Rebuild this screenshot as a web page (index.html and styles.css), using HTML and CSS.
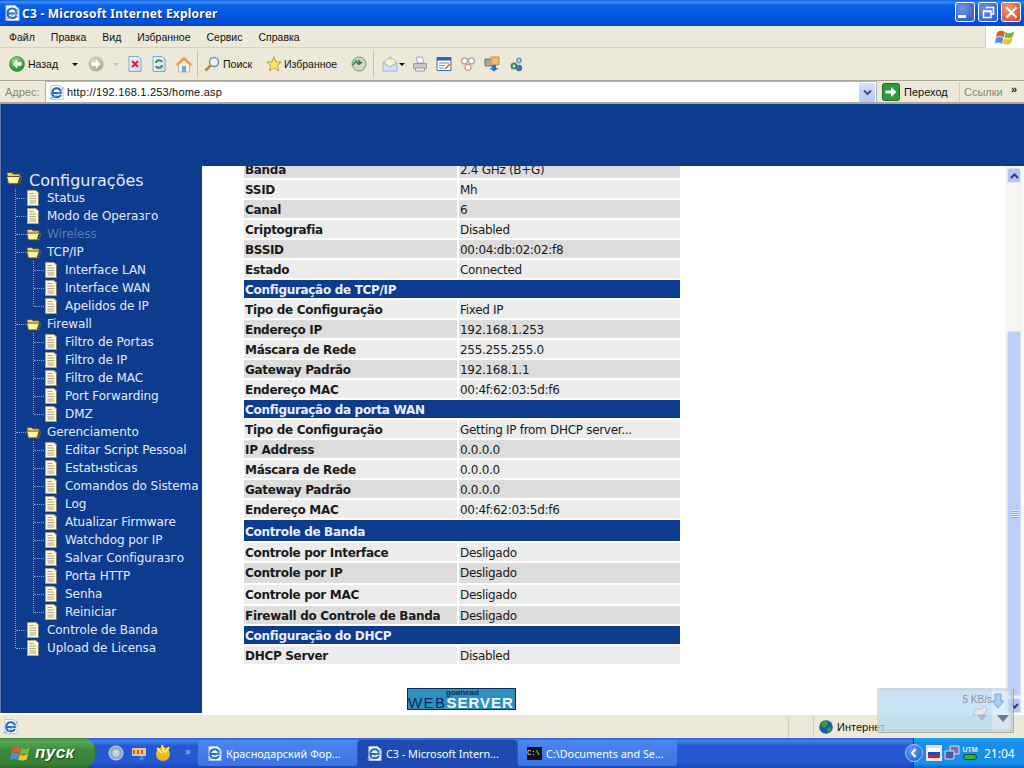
FILE: index.html
```html
<!DOCTYPE html>
<html lang="pt">
<head>
<meta charset="utf-8">
<title>C3 - Microsoft Internet Explorer</title>
<link rel="stylesheet" href="styles.css">
</head>
<body>
<svg class="defs" width="0" height="0" aria-hidden="true">
  <defs>
    <radialGradient id="gGreen" cx=".4" cy=".3" r=".8"><stop offset="0" stop-color="#a8e080"/><stop offset=".6" stop-color="#3fa83c"/><stop offset="1" stop-color="#1f7a2c"/></radialGradient>
    <radialGradient id="gGray" cx=".4" cy=".3" r=".8"><stop offset="0" stop-color="#d8d8d0"/><stop offset="1" stop-color="#a4a49c"/></radialGradient>
    <linearGradient id="gDoc" x1="0" y1="0" x2="1" y2="1"><stop offset="0" stop-color="#f6f9ff"/><stop offset="1" stop-color="#c8d8f0"/></linearGradient>
  </defs>
  <symbol id="page" viewBox="0 0 14 16"><path d="M1.500 .5H10L12.500 3V15.500H1.500Z" fill="#fff6d4" stroke="#a8a288"/><path d="M13 4V15.500H12V4Z" fill="#7e7a62"/><path d="M3.500 3.500H8M3.500 6H10M3.500 8.500H10M3.500 11H10M3.500 13H10" stroke="#a8a490"/></symbol>
  <symbol id="folder" viewBox="0 0 17 14"><path d="M1 3V1.500H6L7.500 3H14V12.500H2.500Z" fill="#e8d27a" stroke="#5a5026"/><path d="M2.500 12.800 .6 5.500H13.500L16 5.800 14 12.800Z" fill="#fff0a8" stroke="#5a5026"/><path d="M13.500 6 15.500 6 14 12.500H11.500Z" fill="#4e4420"/></symbol>
  <symbol id="ie" viewBox="0 0 16 16"><path d="M2 .5H11L15 4V15.500H2Z" fill="#fff" stroke="#b8c4d8"/><path d="M4.500 8.500H12.500C12.500 5 10.500 3.500 8.500 3.500C5.500 3.500 3.500 5.500 3.500 8.500C3.500 11.500 5.500 13 8.500 13C10.500 13 12 12 12.700 10.500" fill="none" stroke="#2468c4" stroke-width="2.200"/><path d="M.5 14C3 15.500 11 10 15.500 2.500" fill="none" stroke="#6aa8e4" stroke-width="1.100"/></symbol>
  <symbol id="round" viewBox="0 0 16 16"><circle cx="8" cy="8" r="7.500" fill="url(#gGreen)" stroke="#2a8a30" stroke-width=".6"/><path d="M8 3.500 3.800 8 8 12.500V9.800H12.500V6.200H8Z" fill="#fff"/></symbol>
  <symbol id="roundr" viewBox="0 0 16 16"><circle cx="8" cy="8" r="7.500" fill="url(#gGray)"/><path d="M8 3.500 12.200 8 8 12.500V9.800H3.500V6.200H8Z" fill="#fff"/></symbol>
  <symbol id="xp" viewBox="0 0 26 24"><path d="M3 5C7 2 10 3 13 5L11 12C8 10 5 10 1 12Z" fill="#e05a30"/><path d="M14 5C17 7 20 7 25 4L23 11C19 14 16 13 12 12Z" fill="#7cb83c"/><path d="M1 13C5 11 8 11 11 13L9 20C6 18 3 18 0 20Z" fill="#4a90e0"/><path d="M12 13C15 15 18 15 23 12L21 19C17 22 14 21 10 20Z" fill="#f2c22c"/></symbol>
</svg>
<div class="window">
  <header class="titlebar">
    <svg class="ico-title"><use href="#ie"/></svg>
    <span class="title-text">C3 - Microsoft Internet Explorer</span>
    <div class="winbtns">
      <button class="wb"><span class="min-glyph"></span></button>
      <button class="wb"><svg width="13" height="13" viewBox="0 0 13 13"><path d="M4 1.500H11.500V8H9M1.500 5H9V11.500H1.500Z M1.500 5.500H9" fill="none" stroke="#fff" stroke-width="1.500"/></svg></button>
      <button class="wb wb-close"><svg width="13" height="13" viewBox="0 0 13 13"><path d="M1.500 1.500 11.500 11.500M11.500 1.500 1.500 11.500" stroke="#fff" stroke-width="2.200"/></svg></button>
    </div>
  </header>

  <div class="menubar">
    <nav class="menu"><span>Файл</span><span>Правка</span><span>Вид</span><span>Избранное</span><span>Сервис</span><span>Справка</span></nav>
    <div class="xpbox"><svg class="xplogo"><use href="#xp"/></svg></div>
  </div>

  <div class="toolbar">
    <svg class="t16"><use href="#round"/></svg><span class="tlabel lab-back">Назад</span><i class="caret c-back"></i>
    <svg class="t16 m-fwd"><use href="#roundr"/></svg><i class="caret faint c-fwd"></i>
    <svg class="t14 m-stop" viewBox="0 0 14 16"><path d="M1 .5H10L13 3V15.500H1Z" fill="url(#gDoc)" stroke="#8aa4cc"/><path d="M4 5 10 11M10 5 4 11" stroke="#d8232a" stroke-width="2.200"/></svg>
    <svg class="t14 m-refresh" viewBox="0 0 14 16"><path d="M1 .5H10L13 3V15.500H1Z" fill="url(#gDoc)" stroke="#8aa4cc"/><path d="M4 7C4 4 9 3 10 6M10 9C10 12 5 13 4 10" fill="none" stroke="#2c9a3a" stroke-width="2"/></svg>
    <svg class="t18 m-home" viewBox="0 0 18 17"><path d="M3.500 8V16H14.500V8L9 3Z" fill="#f4f0e4" stroke="#c8b890"/><path d="M9 .8 .8 8.500 2.800 9.800 9 4.200 15.200 9.800 17.200 8.500Z" fill="#ee9a40"/><path d="M7 10H11V16H7Z" fill="#7ca4dc"/></svg>
    <span class="tsep s1"></span>
    <svg class="t16 m-search" viewBox="0 0 16 16"><circle cx="10" cy="6" r="4.500" fill="#e8f2fc" stroke="#7f8c98" stroke-width="1.400"/><path d="M6.500 9.500 1.500 14.500" stroke="#c08a3c" stroke-width="2.600"/></svg><span class="tlabel lab-search">Поиск</span>
    <svg class="t16 m-star" viewBox="0 0 16 16"><path d="M8 .8 10 5.800 15.400 6.100 11.200 9.500 12.700 14.800 8 11.900 3.300 14.800 4.800 9.500 .6 6.100 6 5.800Z" fill="#fbe36a" stroke="#b8a03a"/></svg><span class="tlabel lab-fav">Избранное</span>
    <svg class="t16 m-hist" viewBox="0 0 16 16"><circle cx="8" cy="8" r="7" fill="#cfd8c8" stroke="#7a9a7a"/><path d="M8 4V8L11 6" fill="none" stroke="#3c6c3c" stroke-width="1.600"/><path d="M2 9 5 5 7 8" fill="none" stroke="#2c9a3a" stroke-width="1.600"/></svg>
    <span class="tsep s2"></span>
    <svg class="t16 m-mail" viewBox="0 0 16 16"><path d="M1 6.500 8 1 15 6.500V15H1Z" fill="#d8e4f6" stroke="#9ab0d4"/><path d="M3.500 3.500H12.500V8L8 10.500 3.500 8Z" fill="#fff4c8" stroke="#d8c88a" stroke-width=".6"/><path d="M1 7 8 11 15 7" fill="none" stroke="#9ab0d4"/></svg><i class="caret c-mail"></i>
    <svg class="t16 m-print" viewBox="0 0 16 16"><path d="M4.500 1H10.500L12 7H5.500Z" fill="#f4f6fa" stroke="#a4acb8"/><path d="M1.500 7.500H14.500V12.500H1.500Z" fill="#c8c8cc" stroke="#9a9aa0"/><path d="M3.500 12H12.500V15H3.500Z" fill="#eee" stroke="#a0a0a0"/></svg>
    <svg class="t16 m-edit" viewBox="0 0 16 16"><path d="M1 1.500H15V14.500H1Z" fill="#fff" stroke="#3a6ab0"/><path d="M1 1.500H15V4.500H1Z" fill="#2c62b8"/><path d="M3 7H13M3 9.500H9M3 12H8" stroke="#7a8aa0"/><path d="M9 13 14 8" stroke="#c06a20" stroke-width="1.600"/></svg>
    <svg class="t16 m-disc" viewBox="0 0 16 16"><circle cx="4.500" cy="5" r="3" fill="#fff" stroke="#d8a088" stroke-width="1.400"/><circle cx="11.500" cy="5" r="3" fill="#fff" stroke="#a8b0b8" stroke-width="1.400"/><circle cx="8" cy="11.500" r="3" fill="#fff" stroke="#d8a088" stroke-width="1.400"/></svg>
    <svg class="t16 m-msg" viewBox="0 0 16 16"><path d="M1 3H8V10H1Z" fill="#a4a8a8" stroke="#707474"/><path d="M7 1H15V9H7Z" fill="#f0b860" stroke="#c89048"/><path d="M8 9H12V12H14.500L10 15.500 5.500 12H8Z" fill="#2c70c8"/></svg>
    <svg class="t16 m-tool" viewBox="0 0 16 16"><circle cx="11" cy="4.500" r="3" fill="#7ca4b4"/><circle cx="6" cy="10" r="3.500" fill="#4f8a64"/><circle cx="11" cy="12" r="3.200" fill="#3c78a8"/><circle cx="6" cy="10" r="1.200" fill="#dfe8e8"/><circle cx="11" cy="4.500" r="1" fill="#eef"/></svg>
  </div>

  <div class="addressbar">
    <span class="addr-label">Адрес:</span>
    <div class="addr-field">
      <svg class="addr-ie"><use href="#ie"/></svg>
      <span class="addr-url">http://192.168.1.253/home.asp</span>
      <span class="addr-drop"><svg width="9" height="7" viewBox="0 0 9 7"><path d="M1 1.500 4.500 5 8 1.500" fill="none" stroke="#40508a" stroke-width="2"/></svg></span>
    </div>
    <svg class="go" viewBox="0 0 18 18"><rect x=".5" y=".5" width="17" height="17" rx="2" fill="#2f9a3a" stroke="#1c6a26"/><path d="M3.500 7.500H9V4L14.500 9 9 14V10.500H3.500Z" fill="#fff"/></svg>
    <span class="go-label">Переход</span>
    <span class="links-sep"></span>
    <span class="links">Ссылки</span>
    <span class="chev">»</span>
  </div>

  <div class="viewport">
    <div class="banner"></div>
    <div class="frames">
      <aside class="side">
        <div class="root"><svg class="i-folder-root"><use href="#folder"/></svg><span>Configurações</span></div>
        <ul class="tree">
          <li><div class="row"><svg class="i-page"><use href="#page"/></svg><span>Status</span></div></li>
          <li><div class="row"><svg class="i-page"><use href="#page"/></svg><span>Modo de Operaзгo</span></div></li>
          <li><div class="row off"><svg class="i-folder"><use href="#folder"/></svg><span>Wireless</span></div></li>
          <li><div class="row"><svg class="i-folder"><use href="#folder"/></svg><span>TCP/IP</span></div>
            <ul class="tree sub">
              <li><div class="row"><svg class="i-page"><use href="#page"/></svg><span>Interface LAN</span></div></li>
              <li><div class="row"><svg class="i-page"><use href="#page"/></svg><span>Interface WAN</span></div></li>
              <li><div class="row"><svg class="i-page"><use href="#page"/></svg><span>Apelidos de IP</span></div></li>
            </ul></li>
          <li><div class="row"><svg class="i-folder"><use href="#folder"/></svg><span>Firewall</span></div>
            <ul class="tree sub">
              <li><div class="row"><svg class="i-page"><use href="#page"/></svg><span>Filtro de Portas</span></div></li>
              <li><div class="row"><svg class="i-page"><use href="#page"/></svg><span>Filtro de IP</span></div></li>
              <li><div class="row"><svg class="i-page"><use href="#page"/></svg><span>Filtro de MAC</span></div></li>
              <li><div class="row"><svg class="i-page"><use href="#page"/></svg><span>Port Forwarding</span></div></li>
              <li><div class="row"><svg class="i-page"><use href="#page"/></svg><span>DMZ</span></div></li>
            </ul></li>
          <li><div class="row"><svg class="i-folder"><use href="#folder"/></svg><span>Gerenciamento</span></div>
            <ul class="tree sub">
              <li><div class="row"><svg class="i-page"><use href="#page"/></svg><span>Editar Script Pessoal</span></div></li>
              <li><div class="row"><svg class="i-page"><use href="#page"/></svg><span>Estatнsticas</span></div></li>
              <li><div class="row"><svg class="i-page"><use href="#page"/></svg><span>Comandos do Sistema</span></div></li>
              <li><div class="row"><svg class="i-page"><use href="#page"/></svg><span>Log</span></div></li>
              <li><div class="row"><svg class="i-page"><use href="#page"/></svg><span>Atualizar Firmware</span></div></li>
              <li><div class="row"><svg class="i-page"><use href="#page"/></svg><span>Watchdog por IP</span></div></li>
              <li><div class="row"><svg class="i-page"><use href="#page"/></svg><span>Salvar Configuraзгo</span></div></li>
              <li><div class="row"><svg class="i-page"><use href="#page"/></svg><span>Porta HTTP</span></div></li>
              <li><div class="row"><svg class="i-page"><use href="#page"/></svg><span>Senha</span></div></li>
              <li><div class="row"><svg class="i-page"><use href="#page"/></svg><span>Reiniciar</span></div></li>
            </ul></li>
          <li><div class="row"><svg class="i-page"><use href="#page"/></svg><span>Controle de Banda</span></div></li>
          <li><div class="row"><svg class="i-page"><use href="#page"/></svg><span>Upload de Licensa</span></div></li>
        </ul>
      </aside>
      <main class="main">
        <table class="info">
          <tr class="a"><th>Banda</th><td>2.4 GHz (B+G)</td></tr>
          <tr class="b"><th>SSID</th><td>Mh</td></tr>
          <tr class="a"><th>Canal</th><td>6</td></tr>
          <tr class="b"><th>Criptografia</th><td>Disabled</td></tr>
          <tr class="a"><th>BSSID</th><td>00:04:db:02:02:f8</td></tr>
          <tr class="b"><th>Estado</th><td>Connected</td></tr>
          <tr class="h"><th colspan="2">Configuração de TCP/IP</th></tr>
          <tr class="b"><th>Tipo de Configuração</th><td>Fixed IP</td></tr>
          <tr class="a"><th>Endereço IP</th><td>192.168.1.253</td></tr>
          <tr class="b"><th>Máscara de Rede</th><td>255.255.255.0</td></tr>
          <tr class="a"><th>Gateway Padrão</th><td>192.168.1.1</td></tr>
          <tr class="b"><th>Endereço MAC</th><td>00:4f:62:03:5d:f6</td></tr>
          <tr class="h"><th colspan="2">Configuração da porta WAN</th></tr>
          <tr class="b"><th>Tipo de Configuração</th><td>Getting IP from DHCP server...</td></tr>
          <tr class="a"><th>IP Address</th><td>0.0.0.0</td></tr>
          <tr class="b"><th>Máscara de Rede</th><td>0.0.0.0</td></tr>
          <tr class="a"><th>Gateway Padrão</th><td>0.0.0.0</td></tr>
          <tr class="b"><th>Endereço MAC</th><td>00:4f:62:03:5d:f6</td></tr>
          <tr class="h h21"><th colspan="2">Controle de Banda</th></tr>
          <tr class="b"><th>Controle por Interface</th><td>Desligado</td></tr>
          <tr class="a h20"><th>Controle por IP</th><td>Desligado</td></tr>
          <tr class="b h19"><th>Controle por MAC</th><td>Desligado</td></tr>
          <tr class="a"><th>Firewall do Controle de Banda</th><td>Desligado</td></tr>
          <tr class="h"><th colspan="2">Configuração do DHCP</th></tr>
          <tr class="b"><th>DHCP Server</th><td>Disabled</td></tr>
        </table>
        <div class="logo"><span class="logo-top">goahead</span><span class="logo-main"><span class="web">WEB</span><span class="server">SERVER</span></span></div>
      </main>
      <div class="scrollbar">
        <span class="sb-up"><svg width="9" height="6" viewBox="0 0 9 6"><path d="M1 5 4.500 1.500 8 5" fill="none" stroke="#2c3f78" stroke-width="2"/></svg></span>
        <span class="sb-track"></span>
        <span class="sb-thumb"><span class="grip"></span></span>
        <span class="sb-down"><svg width="9" height="6" viewBox="0 0 9 6"><path d="M1 1 4.500 4.500 8 1" fill="none" stroke="#2c3f78" stroke-width="2"/></svg></span>
      </div>
    </div>
  </div>

  <div class="status">
    <svg class="st-ie"><use href="#ie"/></svg>
    <span class="st-cell c1"></span><span class="st-cell c2"></span>
    <svg class="globe" viewBox="0 0 14 14"><circle cx="7" cy="7" r="6.800" fill="#1f5aa8"/><path d="M3 2 7 1 9 3 7 6 5 8 2 6ZM8 8 12 7 12 10 9 13Z" fill="#3aa02c"/></svg>
    <span class="zone">Интернет</span>
  </div>

  <footer class="taskbar">
    <button class="start"><svg class="start-logo"><use href="#xp"/></svg><span>пуск</span></button>
    <div class="quick">
      <svg class="q16" viewBox="0 0 16 16"><circle cx="8" cy="8" r="7" fill="#8fa8c8" stroke="#dde"/><circle cx="8" cy="8" r="3.500" fill="#c8d4e4"/></svg>
      <svg class="q16" viewBox="0 0 16 16"><path d="M1 3H15V11H1Z" fill="#f0c090"/><path d="M3 5V9M7 5V9M11 5V9" stroke="#b86030" stroke-width="2"/><path d="M9 11H12V13H14L10.500 16 7 13H9Z" fill="#3c90e0"/></svg>
      <svg class="q18" viewBox="0 0 18 18"><circle cx="9" cy="10" r="7" fill="#f0b820"/><path d="M3 4 8 9M8 1 10 8M15 3 11 9" stroke="#fff070" stroke-width="2"/></svg>
      <span class="q-more">»</span>
    </div>
    <div class="task"><svg class="tk-ico"><use href="#ie"/></svg><span>Краснодарский Фор...</span></div>
    <div class="task on"><svg class="tk-ico"><use href="#ie"/></svg><span>C3 - Microsoft Intern...</span></div>
    <div class="task"><span class="cmd">C:\</span><span>C:\Documents and Se...</span></div>
    <div class="tray">
      <span class="tray-chev"><svg width="10" height="10" viewBox="0 0 10 10"><path d="M6.500 1 3 5 6.500 9" fill="none" stroke="#fff" stroke-width="2"/></svg></span>
      <svg class="tr-ico flag" viewBox="0 0 16 16"><rect width="16" height="16" fill="#e8e4dc"/><path d="M2 3H14V7H2Z" fill="#fff"/><path d="M2 7H14V10H2Z" fill="#2c48b8"/><path d="M2 10H14V13H2Z" fill="#d8202c"/></svg>
      <svg class="tr-ico net" viewBox="0 0 16 16"><path d="M6 1H15V9H6Z" fill="#6a7ab8" stroke="#dde"/><path d="M1 6H10V14H1Z" fill="#4a5aa0" stroke="#dde"/></svg>
      <span class="utm"><span class="utm-t">UTM</span><span class="utm-b"></span></span>
      <time class="clock">21:04</time>
    </div>
  </footer>

  <aside class="meter">
    <span class="kb">5 KB/s</span>
    <svg class="m-down" viewBox="0 0 14 16"><path d="M4 1H10V8H13L7 15 1 8H4Z" fill="#a8cfec" stroke="#6fa4d0"/></svg>
    <svg class="m-cloud" viewBox="0 0 16 12"><path d="M1 10 3 4 9 4 12 1 15 3 13 9 8 10Z" fill="#e2e8ea" stroke="#b8c0c4"/></svg>
    <svg class="m-tri1" viewBox="0 0 10 6"><path d="M0 0H10L5 6Z" fill="#a8b8c4"/></svg>
    <svg class="m-tri2" viewBox="0 0 12 7"><path d="M0 0H12L6 7Z" fill="#6c7c8c"/></svg>
  </aside>
</div>
</body>
</html>
```
FILE: styles.css
```css
* { box-sizing: border-box; }
html, body { margin: 0; padding: 0; }
body { width: 1024px; height: 768px; overflow: hidden; background: #0d3b8e; font-family: "DejaVu Sans", Verdana, sans-serif; }
.defs { position: absolute; }
ul { list-style: none; margin: 0; padding: 0; }
button { border: 0; padding: 0; margin: 0; font: inherit; }
.window { position: relative; width: 1024px; height: 768px; display: flex; flex-direction: column; overflow: hidden; }

.titlebar { height: 26px; flex: none; display: flex; align-items: center; padding: 0 0 0 4px; background: linear-gradient(#0a5ae0 0, #3f90f4 2px, #0a62e8 5px, #0058e4 14px, #0050d8 22px, #0a48c0 26px); }
.ico-title { width: 16px; height: 16px; margin-right: 2px; }
.title-text { color: #fff; font: bold 12px "Noto Sans", sans-serif; text-shadow: 1px 1px 0 #0a2a80; letter-spacing: .23px; }
.winbtns { margin: 0 3px 2px auto; display: flex; gap: 3px; }
.wb { width: 20px; height: 20px; border: 1px solid #fff; border-radius: 3px; background: radial-gradient(circle at 35% 30%, #6f94e8, #2a52c8); display: flex; align-items: center; justify-content: center; }
.wb-close { background: radial-gradient(circle at 35% 30%, #f09a78, #d8421c); }
.min-glyph { width: 8px; height: 3px; background: #fff; margin: 9px 6px 0 0; }

.menubar { height: 22px; flex: none; display: flex; background: #ece9d8; border-bottom: 1px solid #d8d2bd; }
.menu { display: flex; gap: 16px; padding: 3px 0 0 9px; font: 10.500px "Liberation Sans", sans-serif; color: #111; height: 21px; line-height: 16px; }
.xpbox { margin-left: auto; width: 39px; height: 22px; background: #fff; border-left: 1px solid #d8d2bd; display: flex; align-items: center; justify-content: center; }
.xplogo { width: 20px; height: 19px; }

.toolbar { height: 33px; flex: none; display: flex; align-items: center; padding-left: 9px; background: #ece9d8; border-bottom: 1px solid #aca899; font: 10.500px "Liberation Sans", sans-serif; color: #111; }
.toolbar svg { flex: none; }
.t16 { width: 16px; height: 16px; }
.t14 { width: 14px; height: 16px; }
.t18 { width: 18px; height: 17px; }
.tlabel { white-space: nowrap; }
.lab-back { margin-left: 3px; width: 34px; }
.caret { display: block; width: 0; height: 0; border: 3px solid transparent; border-top: 3px solid #111; border-bottom: 0; flex: none; }
.caret.faint { border-top-color: #c4c2b4; }
.c-back { margin-left: 10px; }
.m-fwd { margin-left: 10px; }
.c-fwd { margin-left: 9px; }
.m-stop { margin-left: 9px; }
.m-refresh { margin-left: 10px; }
.m-home { margin-left: 9px; }
.tsep { width: 1px; height: 28px; background: #c8c5b2; flex: none; }
.s1 { margin-left: 4px; }
.m-search { margin-left: 6px; }
.lab-search { margin-left: 3px; width: 30px; }
.m-star { margin-left: 13px; }
.lab-fav { margin-left: 2px; width: 54px; }
.m-hist { margin-left: 13px; }
.s2 { margin-left: 6px; }
.m-mail { margin-left: 8px; }
.c-mail { margin-left: 1px; }
.m-print { margin-left: 7px; }
.m-edit { margin-left: 8px; }
.m-disc { margin-left: 8px; }
.m-msg { margin-left: 8px; }
.m-tool { margin-left: 8px; }

.addressbar { height: 23px; flex: none; display: flex; align-items: center; padding-left: 5px; background: #ece9d8; border-bottom: 2px solid #aca899; font: 11px "Liberation Sans", sans-serif; color: #111; }
.addr-label { color: #8a887c; width: 40px; }
.addr-field { width: 832px; height: 21px; background: #fff; border: 1px solid #a8b4c4; border-bottom: 0; display: flex; align-items: center; padding-left: 3px; }
.addr-ie { width: 15px; height: 15px; }
.addr-url { margin-left: 3px; letter-spacing: .2px; }
.addr-drop { margin-left: auto; margin-right: 1px; width: 16px; height: 19px; background: linear-gradient(#d4e0fa, #b4c8f4); border-radius: 2px; display: flex; align-items: center; justify-content: center; }
.go { width: 18px; height: 18px; margin-left: 5px; flex: none; }
.go-label { margin-left: 4px; width: 44px; }
.links-sep { width: 1px; height: 20px; background: #d0ccb8; margin-left: 11px; }
.links { margin-left: 4px; color: #8a887c; width: 38px; }
.chev { margin-left: 9px; font-weight: bold; margin-top: -6px; }

.viewport { flex: 1; min-height: 0; display: flex; flex-direction: column; background: #0d3b8e; border-left: 1px solid #5f78a8; }
.banner { height: 62px; flex: none; }
.frames { flex: 1; min-height: 0; display: flex; background: #fbfbf6; }

.side { width: 201px; flex: none; background: #0d3b8e; color: #e4eaf6; font-size: 12px; padding-top: 3px; overflow: hidden; }
.root { display: flex; align-items: center; height: 18px; font-size: 16px; margin-top: 2px; }
.i-folder-root { width: 17px; height: 14px; margin: -4px 6px 0 5px; flex: none; }
.tree { margin-left: 14px; border-left: 1px dotted #8ea4cc; display: flow-root; margin-bottom: 9px; }
.tree.sub { margin-left: 17px; }
.tree > li:last-child { margin-bottom: -9px; }
.row { height: 18px; display: flex; align-items: center; white-space: nowrap; letter-spacing: -.05px; }
.row::before { content: ""; width: 10px; border-top: 1px dotted #8ea4cc; flex: none; }
.i-page { width: 14px; height: 16px; margin-right: 7px; flex: none; }
.i-folder { width: 16px; height: 13px; margin-right: 5px; flex: none; }
.off { color: #5d76ab; }

.main { flex: 1; min-width: 0; background: #fff; padding-left: 40px; overflow: hidden; }
.info { border-collapse: separate; border-spacing: 2px; margin-top: -8px; width: 440px; table-layout: fixed; font-size: 12px; color: #1a1a1a; }
.info tr { height: 18px; }
.info th { width: 213px; text-align: left; font-weight: bold; padding: 1px 1px 0; white-space: nowrap; line-height: 14px; letter-spacing: -.31px; }
.info td { padding: 1px 1px 0; white-space: nowrap; line-height: 14px; letter-spacing: -.3px; }
.info .a th, .info .a td { background: #dcdcdc; }
.info .b th, .info .b td { background: #ececec; }
.info .h th { background: #0d3b8e; color: #e8f0ff; }
.info .h21 { height: 21px; }
.info .h21 th { padding-top: 2px; }
.info .h20 { height: 20px; }
.info .h20 th, .info .h20 td { padding: 0 1px 1px; }
.info .h19 { height: 19px; }

.logo { width: 109px; height: 22px; margin: 22px 0 0 165px; background: #2f90c0; border: 1px solid #0a2a50; display: flex; flex-direction: column; align-items: stretch; overflow: hidden; }
.logo-top { font: bold 8px/7px "Liberation Sans", sans-serif; color: #0d3060; padding-left: 38px; }
.logo-main { font: bold 15px/13px "Liberation Sans", sans-serif; white-space: nowrap; }
.web { color: #0a2a60; font-weight: normal; letter-spacing: 1.400px; }
.server { color: #eaf8ff; letter-spacing: 1px; }

.scrollbar { width: 17px; flex: none; background: #f6f5ef; display: flex; flex-direction: column; margin-right: 2px; }
.sb-up, .sb-down { height: 15px; flex: none; margin: 2px 1px 0 2px; background: #b5c7ee; border: 1px solid #dde6f8; border-radius: 2px; display: flex; align-items: center; justify-content: center; }
.sb-track { height: 148px; flex: none; }
.sb-thumb { flex: 1; min-height: 0; margin: 0 1px 0 2px; background: #bccff8; border: 1px solid #d8e2fa; border-radius: 2px; display: flex; align-items: center; justify-content: center; }
.grip { width: 7px; height: 8px; background: repeating-linear-gradient(#e4ecfc 0 1px, #8fa8e0 1px 2px); }

.status { height: 25px; flex: none; display: flex; align-items: center; padding-left: 3px; background: #ece9d8; border-top: 2px solid #fff; font: 11px "Liberation Sans", sans-serif; color: #111; }
.st-ie { width: 15px; height: 15px; }
.st-cell { width: 1px; height: 22px; background: #d4d0bc; }
.c1 { margin-left: 770px; }
.c2 { margin-left: 24px; }
.globe { width: 14px; height: 14px; margin-left: 5px; }
.zone { margin-left: 4px; }

.taskbar { height: 30px; flex: none; display: flex; align-items: center; background: linear-gradient(#2a64d8 0, #3f80ec 3px, #2458d0 8px, #2558d4 24px, #1c46b0 30px); color: #fff; font: 10.800px "Noto Sans", sans-serif; }
.start { width: 95px; height: 30px; flex: none; display: flex; align-items: center; background: linear-gradient(#3c8c3c 0, #58a858 4px, #3c8a3c 12px, #358035 26px, #2a6a2a 30px); border-radius: 0 12px 12px 0; color: #fff; font: italic bold 17px "Liberation Sans", sans-serif; padding-left: 10px; text-shadow: 1px 1px 1px #1a3a1a; letter-spacing: .4px; }
.start-logo { width: 21px; height: 19px; margin-right: 4px; }
.quick { width: 103px; flex: none; display: flex; align-items: center; padding-left: 13px; gap: 7px; }
.q16 { width: 16px; height: 16px; }
.q18 { width: 18px; height: 18px; }
.q-more { margin-left: 6px; color: #a8c0f0; margin-top: -6px; }
.task { width: 159px; height: 26px; flex: none; margin-right: 1px; display: flex; align-items: center; padding-left: 9px; background: linear-gradient(#4a86ee, #3c74e4); border-radius: 3px; white-space: nowrap; }
.task.on { background: #1f4bb0; }
.tk-ico { width: 15px; height: 15px; margin-right: 4px; flex: none; }
.cmd { width: 15px; height: 13px; background: #111; font: 7px/13px "Liberation Mono", monospace; color: #fff; margin-right: 4px; flex: none; overflow: hidden; }
.tray { margin-left: auto; width: 111px; height: 30px; flex: none; display: flex; align-items: center; background: linear-gradient(#16a8ec 0, #1a8cec 4px, #1490e8 26px, #1060c8 30px); border-left: 1px solid #0a3a90; }
.tray-chev { width: 18px; height: 18px; margin-left: -9px; border-radius: 50%; background: radial-gradient(circle at 40% 35%, #5a9cf0, #1e5cc8); border: 1px solid #a8ccf4; display: flex; align-items: center; justify-content: center; flex: none; }
.tr-ico { width: 16px; height: 16px; flex: none; }
.flag { margin-left: 3px; }
.net { margin-left: 2px; }
.utm { margin-left: 2px; width: 16px; display: flex; flex-direction: column; align-items: center; flex: none; }
.utm-t { font: bold 7px/8px "Liberation Sans", sans-serif; color: #d8f4ff; }
.utm-b { width: 14px; height: 6px; border-radius: 3px; background: #2cb82c; border: 1px solid #0a4a1a; }
.clock { margin-left: 6px; color: #fff; font-size: 12px; }

.meter { position: absolute; left: 877px; top: 688px; width: 136px; height: 44px; background: linear-gradient(90deg, rgba(178, 218, 244, .72) 86%, rgba(200, 228, 246, .6) 86%); border: 3px solid rgba(200, 205, 200, .45); box-shadow: 1px 1px 0 rgba(120, 120, 110, .5); }
.kb { position: absolute; right: 18px; top: 3px; font: 10px "Liberation Sans", sans-serif; color: #8a9298; }
.m-down { position: absolute; right: 5px; top: 2px; width: 14px; height: 16px; }
.m-cloud { position: absolute; left: 92px; top: 14px; width: 16px; height: 12px; }
.m-tri1 { position: absolute; left: 97px; top: 24px; width: 10px; height: 6px; }
.m-tri2 { position: absolute; left: 117px; top: 24px; width: 12px; height: 7px; }
```
